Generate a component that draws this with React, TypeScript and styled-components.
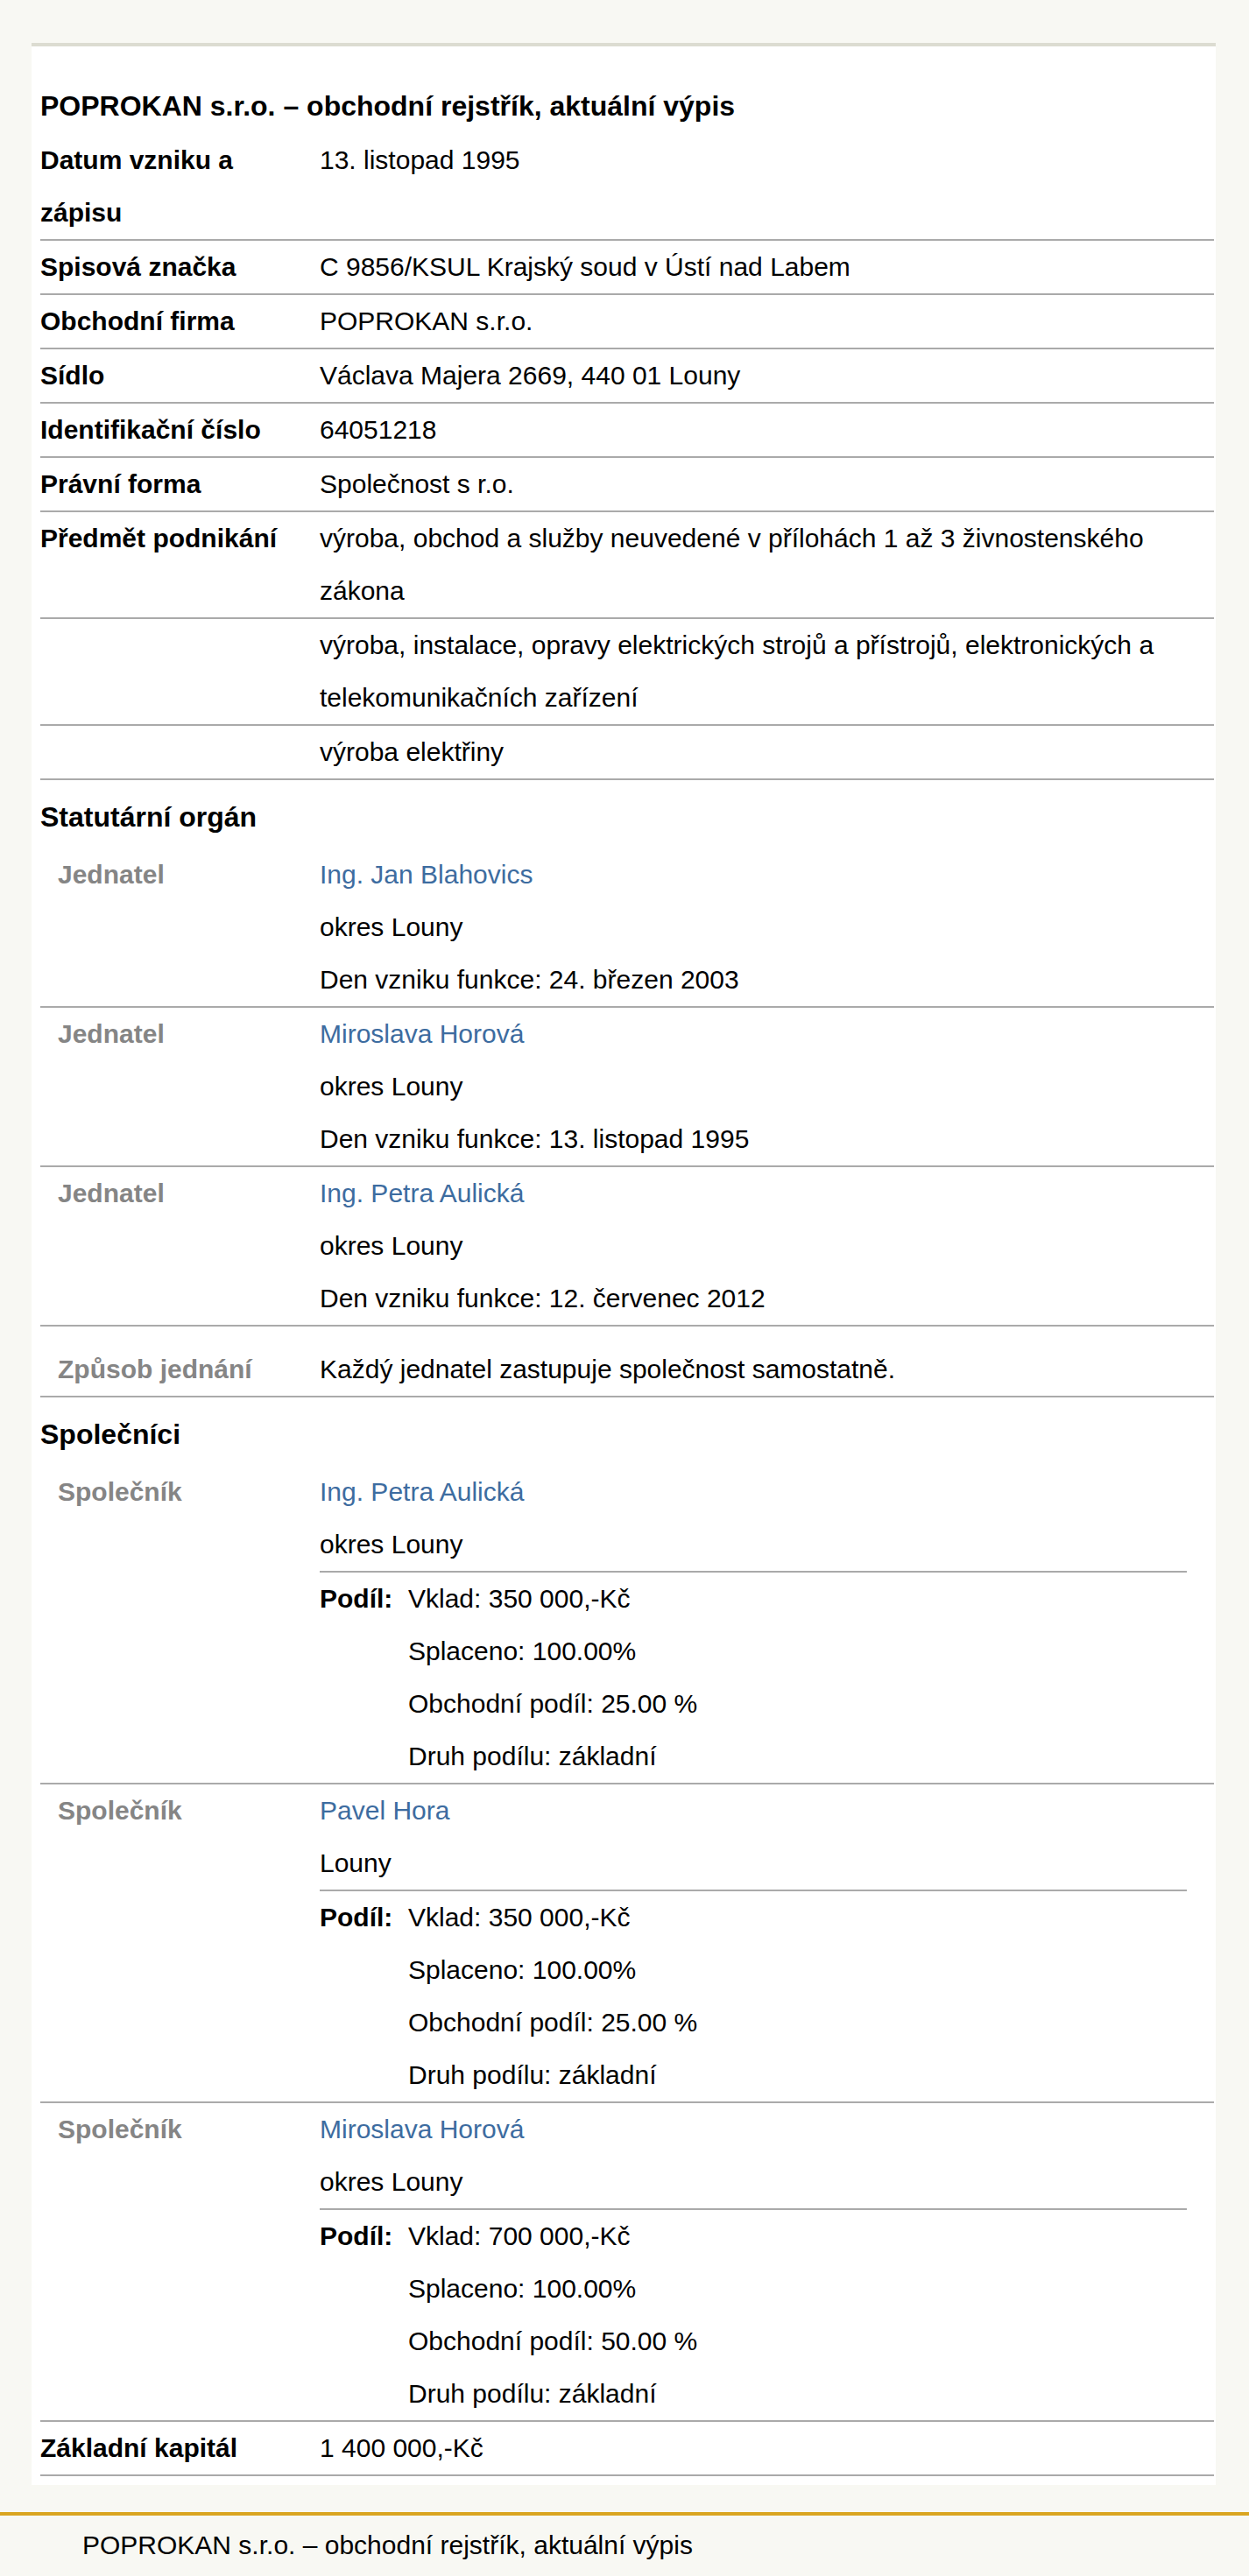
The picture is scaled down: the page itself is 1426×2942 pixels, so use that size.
import React from 'react';
import styled, { createGlobalStyle } from 'styled-components';

const GlobalStyle = createGlobalStyle`
  html,
  body {
    margin: 0;
    padding: 0;
    background: #f8f8f3;
  }

  body {
    font-family: 'Liberation Sans', Arial, sans-serif;
    color: #000;
  }
`;

const Page = styled.div`
  display: flex;
  flex-direction: column;
  min-height: 2942px;
`;

const Card = styled.main`
  margin: 49px 38px 0 36px;
  padding: 36px 2px 10px 10px;
  background: #fff;
  border-top: 4px solid #dcdcd1;
`;

const Title = styled.h1`
  margin: 0;
  font-size: 32px;
  font-weight: 700;
  line-height: 64px;
`;

const SectionHeading = styled.h2`
  margin: 0;
  padding: 10px 0 4px;
  font-size: 32px;
  font-weight: 700;
  line-height: 64px;
`;

const Row = styled.div<{ $spaced?: boolean }>`
  display: grid;
  grid-template-columns: 319px 1fr;
  padding-top: ${(p) => (p.$spaced ? '19px' : '0')};
  border-bottom: 2px solid #aaa;
  font-size: 30px;
  line-height: 60px;
`;

const Label = styled.div<{ $sub?: boolean }>`
  padding: 0 10px 0 ${(p) => (p.$sub ? '20px' : '0')};
  font-weight: 700;
  color: ${(p) => (p.$sub ? '#858585' : '#000')};
`;

const Value = styled.div`
  min-width: 0;
`;

const Line = styled.div``;

const PersonLink = styled.a`
  color: #3d6ca0;
  text-decoration: none;
`;

const Share = styled.div`
  display: grid;
  grid-template-columns: 101px 1fr;
  width: 97%;
  border-top: 2px solid #aaa;
`;

const ShareLabel = styled.div`
  font-weight: 700;
`;

const Footer = styled.footer`
  margin-top: 31px;
  padding: 17px 94px 17px;
  border-top: 4px solid #daa520;
  font-size: 30px;
  line-height: 34px;
`;

const TITLE = 'POPROKAN s.r.o. – obchodní rejstřík, aktuální výpis';

const basics: [string, string][] = [
  ['Datum vzniku a zápisu', '13. listopad 1995'],
  ['Spisová značka', 'C 9856/KSUL Krajský soud v Ústí nad Labem'],
  ['Obchodní firma', 'POPROKAN s.r.o.'],
  ['Sídlo', 'Václava Majera 2669, 440 01 Louny'],
  ['Identifikační číslo', '64051218'],
  ['Právní forma', 'Společnost s r.o.'],
];

const activities = [
  'výroba, obchod a služby neuvedené v přílohách 1 až 3 živnostenského zákona',
  'výroba, instalace, opravy elektrických strojů a přístrojů, elektronických a telekomunikačních zařízení',
  'výroba elektřiny',
];

const executives = [
  { name: 'Ing. Jan Blahovics', place: 'okres Louny', since: '24. březen 2003' },
  { name: 'Miroslava Horová', place: 'okres Louny', since: '13. listopad 1995' },
  { name: 'Ing. Petra Aulická', place: 'okres Louny', since: '12. červenec 2012' },
];

const partners = [
  { name: 'Ing. Petra Aulická', place: 'okres Louny', deposit: '350 000,-Kč', share: '25.00 %' },
  { name: 'Pavel Hora', place: 'Louny', deposit: '350 000,-Kč', share: '25.00 %' },
  { name: 'Miroslava Horová', place: 'okres Louny', deposit: '700 000,-Kč', share: '50.00 %' },
];

export default function App() {
  return (
    <Page>
      <GlobalStyle />
      <Card>
        <Title>{TITLE}</Title>

        {basics.map(([label, value]) => (
          <Row key={label}>
            <Label>{label}</Label>
            <Value>{value}</Value>
          </Row>
        ))}

        {activities.map((item, i) => (
          <Row key={item}>
            <Label>{i === 0 ? 'Předmět podnikání' : ''}</Label>
            <Value>{item}</Value>
          </Row>
        ))}

        <SectionHeading>Statutární orgán</SectionHeading>
        {executives.map((person) => (
          <Row key={person.name}>
            <Label $sub>Jednatel</Label>
            <Value>
              <Line>
                <PersonLink href="#">{person.name}</PersonLink>
              </Line>
              <Line>{person.place}</Line>
              <Line>Den vzniku funkce: {person.since}</Line>
            </Value>
          </Row>
        ))}

        <Row $spaced>
          <Label $sub>Způsob jednání</Label>
          <Value>Každý jednatel zastupuje společnost samostatně.</Value>
        </Row>

        <SectionHeading>Společníci</SectionHeading>
        {partners.map((partner) => (
          <Row key={partner.name}>
            <Label $sub>Společník</Label>
            <Value>
              <Line>
                <PersonLink href="#">{partner.name}</PersonLink>
              </Line>
              <Line>{partner.place}</Line>
              <Share>
                <ShareLabel>Podíl:</ShareLabel>
                <div>
                  <Line>Vklad: {partner.deposit}</Line>
                  <Line>Splaceno: 100.00%</Line>
                  <Line>Obchodní podíl: {partner.share}</Line>
                  <Line>Druh podílu: základní</Line>
                </div>
              </Share>
            </Value>
          </Row>
        ))}

        <Row>
          <Label>Základní kapitál</Label>
          <Value>1 400 000,-Kč</Value>
        </Row>
      </Card>

      <Footer>{TITLE}</Footer>
    </Page>
  );
}
